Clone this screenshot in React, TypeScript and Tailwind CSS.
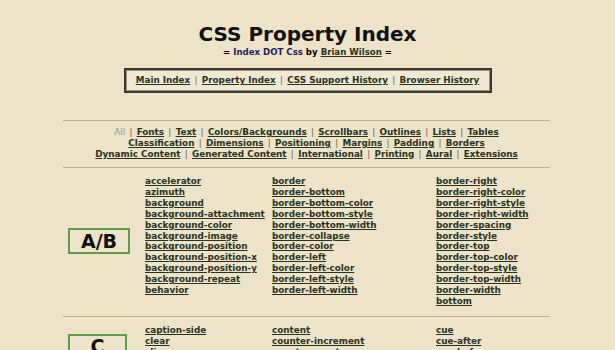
import React from "react";

const font = { fontFamily: '"DejaVu Sans", Verdana, sans-serif' };

const L = ({ children }: { children: React.ReactNode }) => (
  <a href="#" className="text-[#28321f] underline decoration-1 underline-offset-[1px]">
    {children}
  </a>
);

const Sep = () => <span className="font-normal text-[#6b6658] px-[1.5px]"> | </span>;

const sections = [
  {
    label: "A/B",
    boxW: "w-[62px]",
    cols: [
      [
        "accelerator",
        "azimuth",
        "background",
        "background-attachment",
        "background-color",
        "background-image",
        "background-position",
        "background-position-x",
        "background-position-y",
        "background-repeat",
        "behavior",
      ],
      [
        "border",
        "border-bottom",
        "border-bottom-color",
        "border-bottom-style",
        "border-bottom-width",
        "border-collapse",
        "border-color",
        "border-left",
        "border-left-color",
        "border-left-style",
        "border-left-width",
      ],
      [
        "border-right",
        "border-right-color",
        "border-right-style",
        "border-right-width",
        "border-spacing",
        "border-style",
        "border-top",
        "border-top-color",
        "border-top-style",
        "border-top-width",
        "border-width",
        "bottom",
      ],
    ],
  },
  {
    label: "C",
    boxW: "w-[59px]",
    cols: [
      ["caption-side", "clear", "clip", "color"],
      ["content", "counter-increment", "counter-reset"],
      ["cue", "cue-after", "cue-before", "cursor"],
    ],
  },
];

function Joined({ items }: { items: string[] }) {
  return (
    <>
      {items.map((t, i) => (
        <React.Fragment key={t}>
          {i > 0 && <Sep />}
          <L>{t}</L>
        </React.Fragment>
      ))}
    </>
  );
}

export default function App() {
  return (
    <div
      className="h-[350px] w-[615px] overflow-hidden bg-[#ece3c8] text-black font-bold"
      style={font}
    >
      <div className="flex flex-col items-center pt-[22px]">
        <h1 className="text-[20px] leading-[24px] font-bold text-[#111]">CSS Property Index</h1>
        <div className="text-[8.6px] leading-[11px] mt-[1px]">
          = <span className="text-[#23235e]">Index DOT Css</span> by <L>Brian Wilson</L> =
        </div>
        <div className="mt-[10px] w-[368px] h-[25px] flex items-center justify-center border-2 border-[#3c3a35] bg-[#efe8d3] shadow-[inset_0_0_0_1px_#9a9280] text-[8.8px]">
          <span>
            <Joined items={["Main Index", "Property Index", "CSS Support History", "Browser History"]} />
          </span>
        </div>
      </div>

      <div className="ml-[63px] mt-[27px] w-[487px] border-t border-[#bbb196]">
        <div className="pt-[6px] pb-[7px] text-center text-[8.8px] leading-[11px]">
          <div>
            <span className="font-normal text-[#9b978c]">All</span>
            <Sep />
            <Joined items={["Fonts", "Text", "Colors/Backgrounds", "Scrollbars", "Outlines", "Lists", "Tables"]} />
          </div>
          <div>
            <Joined items={["Classification", "Dimensions", "Positioning", "Margins", "Padding", "Borders"]} />
          </div>
          <div>
            <Joined
              items={["Dynamic Content", "Generated Content", "International", "Printing", "Aural", "Extensions"]}
            />
          </div>
        </div>

        {sections.map((s) => (
          <div
            key={s.label}
            className="border-t border-[#bbb196] pt-[8px] pb-[9px] grid grid-cols-[82px_127px_164px_1fr] text-[8.8px] leading-[10.9px]"
          >
            <div className="self-center pl-[5px]">
              <div
                className={`${s.boxW} h-[26px] border-2 border-[#65994a] flex items-center justify-center text-[19px] font-bold text-[#111]`}
              >
                {s.label}
              </div>
            </div>
            {s.cols.map((c, i) => (
              <div key={i} className="flex flex-col items-start">
                {c.map((t) => (
                  <L key={t}>{t}</L>
                ))}
              </div>
            ))}
          </div>
        ))}
      </div>
    </div>
  );
}
